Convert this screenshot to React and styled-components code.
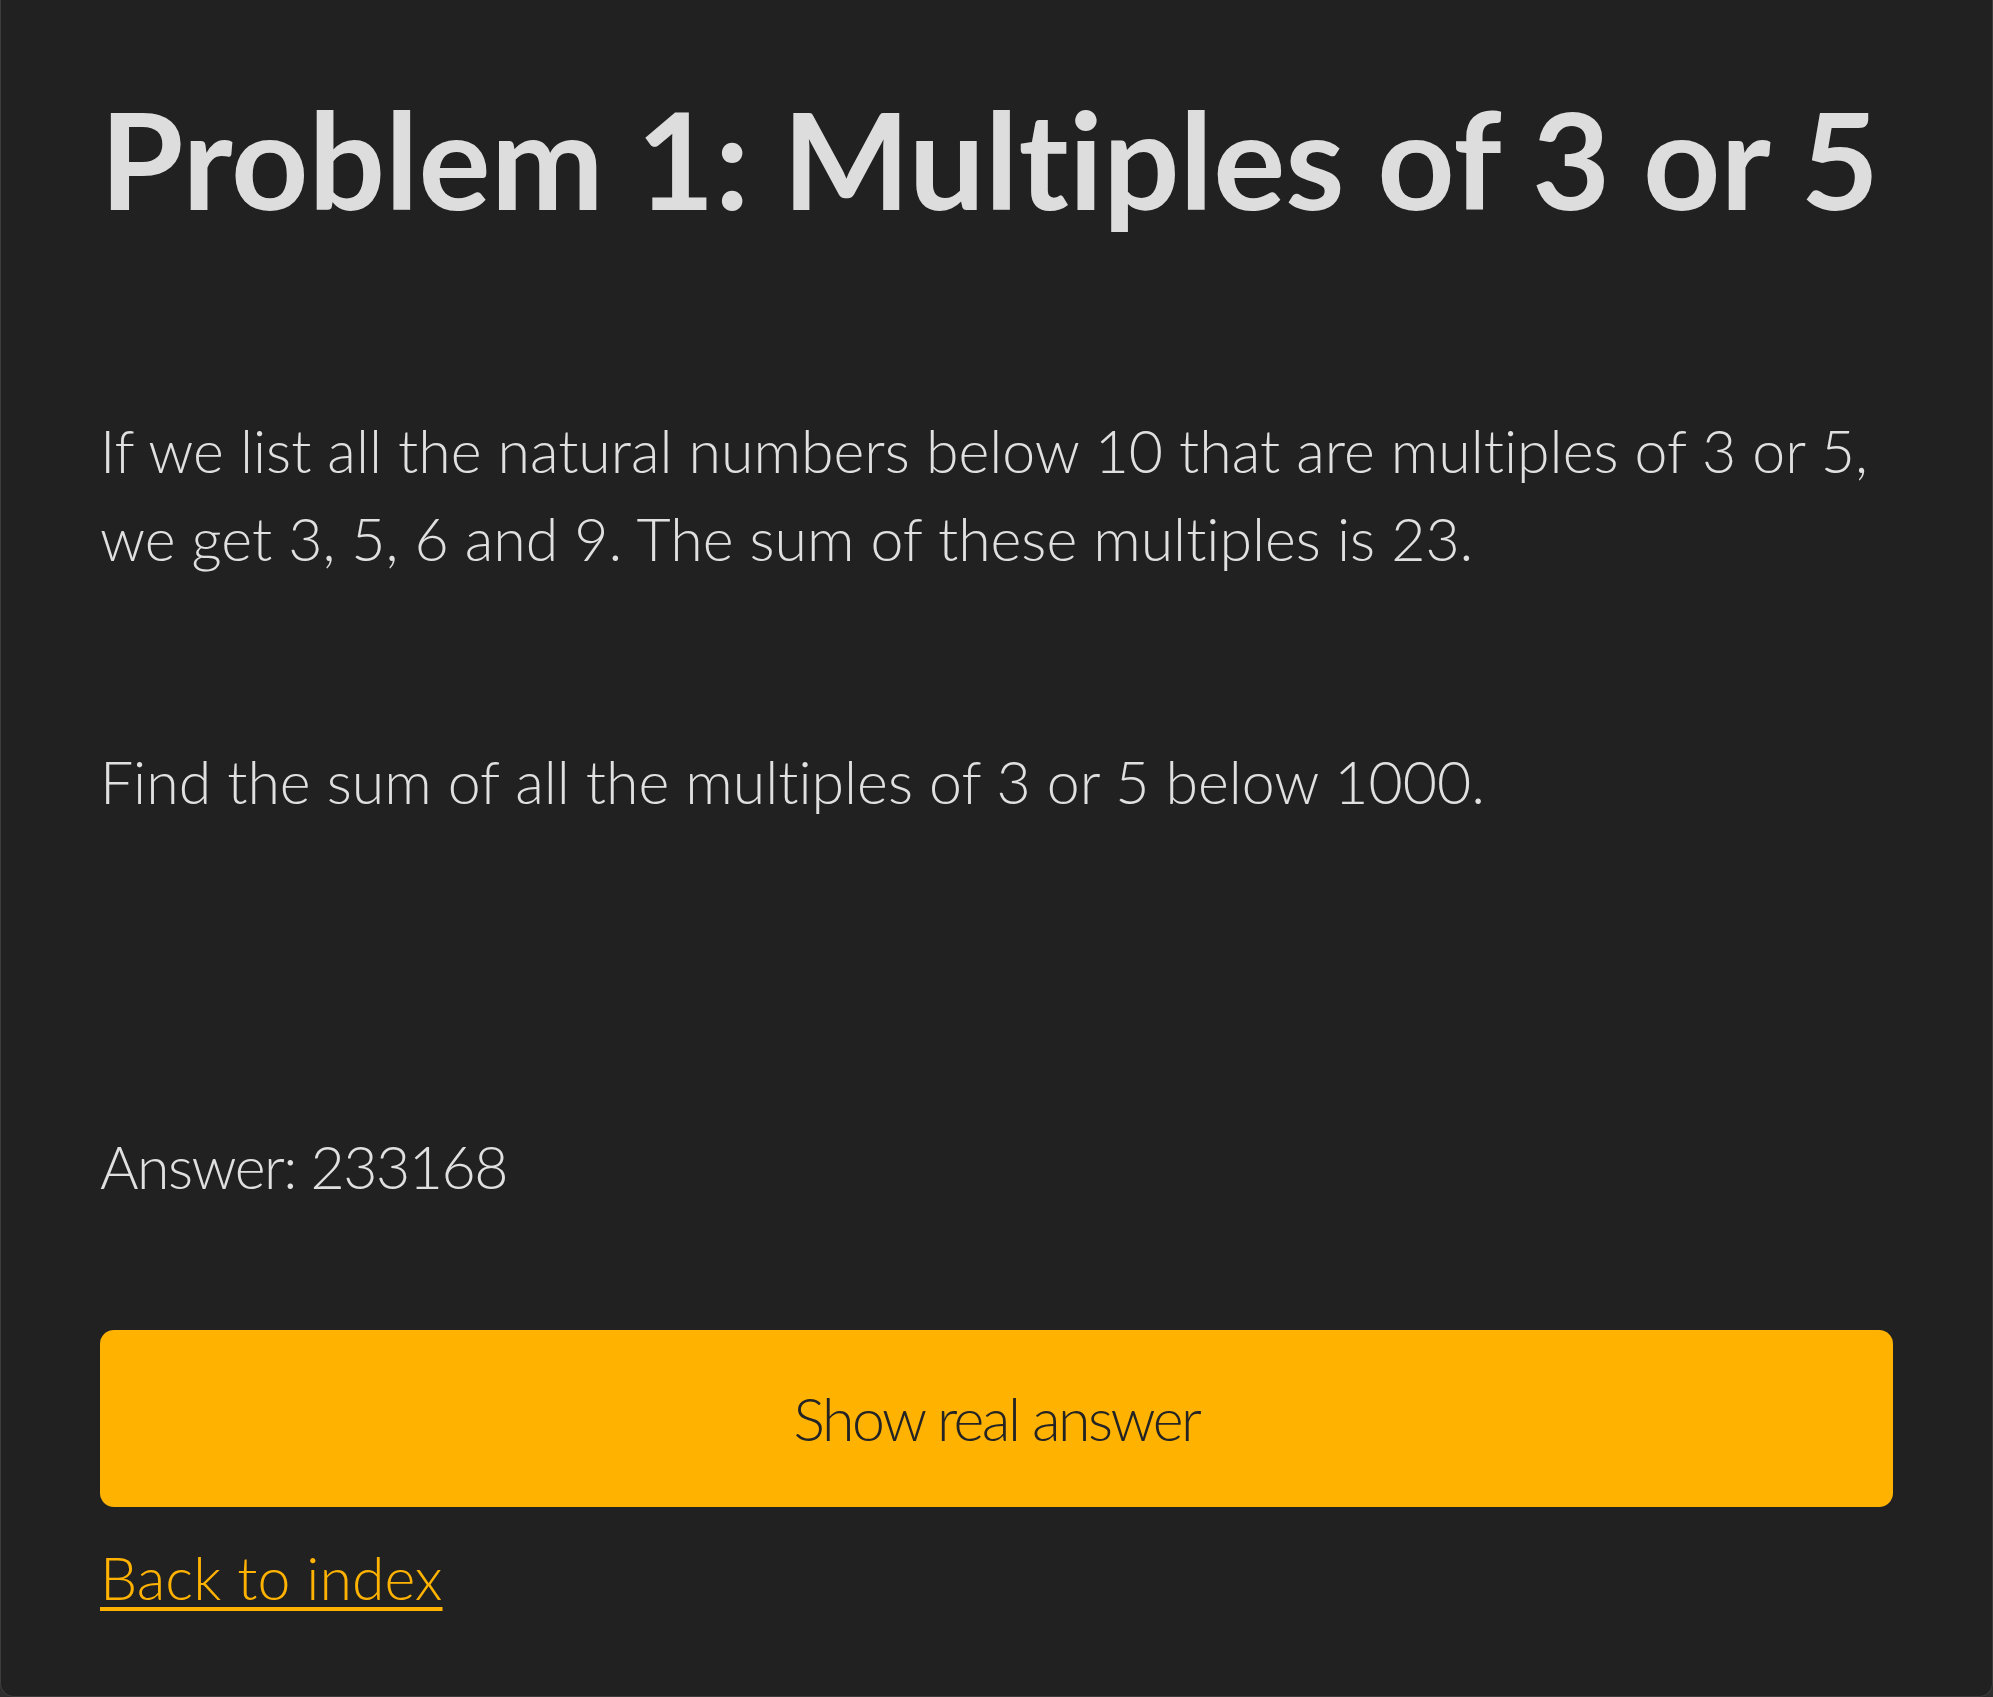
import React, { useState } from "react";
import styled, { createGlobalStyle } from "styled-components";

const GlobalStyle = createGlobalStyle`
  html, body {
    margin: 0;
    padding: 0;
    background: #2e2e2e;
  }
  * {
    box-sizing: border-box;
  }
`;

const Window = styled.div`
  height: 1697px;
  background: #212121;
  border: 1px solid #3d3d3d;
  border-top: none;
  border-radius: 0 0 14px 14px;
  padding: 77px 99px 0;
  color: #e0e0e0;
  font-family: "Lato", "Open Sans", sans-serif;
  font-variant-ligatures: none;
  font-weight: 300;
  font-size: 59px;
  line-height: 88px;
`;

const Title = styled.h1`
  margin: 0;
  font-size: 135px;
  font-weight: 700;
  line-height: 162px;
  color: #dddddd;
  white-space: nowrap;
`;

const Text = styled.p`
  margin: ${(p) => p.$top}px 0 0;
  letter-spacing: ${(p) => p.$tight ? "-1.5px" : "normal"};
`;

const AnswerButton = styled.button`
  display: flex;
  align-items: center;
  justify-content: center;
  width: 100%;
  height: 177px;
  margin-top: 119px;
  border: none;
  border-radius: 14px;
  background: #ffb300;
  color: #242424;
  font: inherit;
  letter-spacing: -2.5px;
  cursor: pointer;

  &:hover {
    background: #ffbd26;
  }
`;

const BackLink = styled.a`
  display: inline-block;
  margin-top: 27px;
  color: #ffb300;
  text-decoration: underline;
  text-decoration-thickness: 4px;
  text-underline-offset: 7px;
`;

const App = () => {
  const [shown, setShown] = useState(false);

  return (
    <>
      <GlobalStyle />
      <Window>
        <Title>Problem 1: Multiples of 3 or 5</Title>
        <Text $top={168}>
          If we list all the natural numbers below 10 that are multiples of 3 or 5,
          we get 3, 5, 6 and 9. The sum of these multiples is 23.
        </Text>
        <Text $top={155}>Find the sum of all the multiples of 3 or 5 below 1000.</Text>
        <Text $top={297} $tight>Answer: 233168</Text>
        <AnswerButton onClick={() => setShown(!shown)}>Show real answer</AnswerButton>
        <div>
          <BackLink href="#">Back to index</BackLink>
        </div>
      </Window>
    </>
  );
};

export default App;
